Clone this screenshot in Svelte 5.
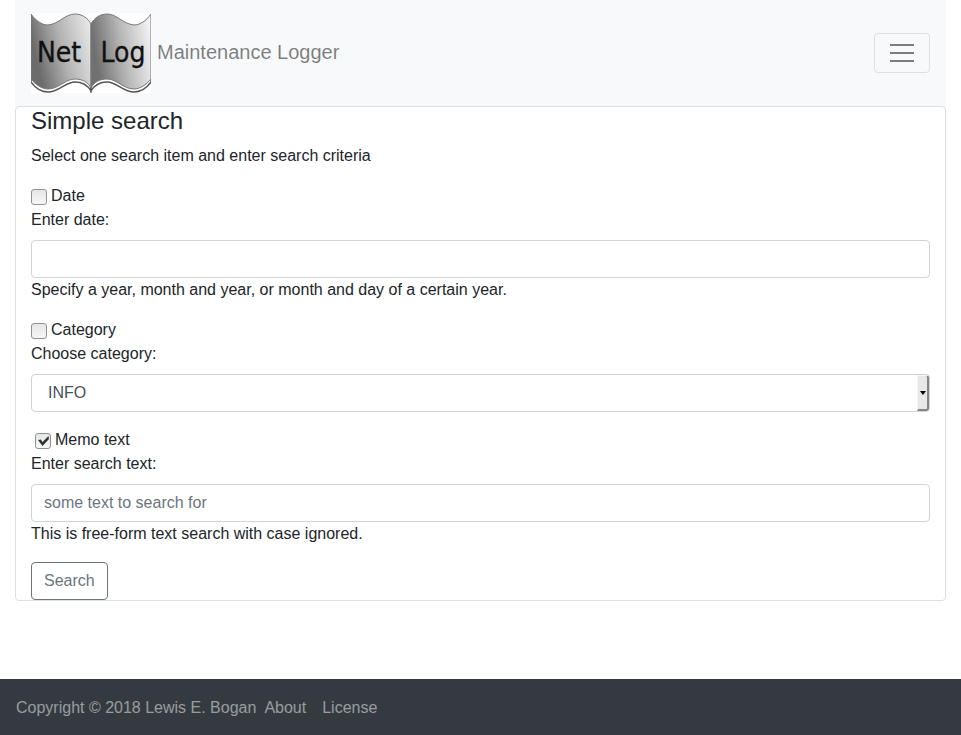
<script>
  let byDate = $state(false);
  let byCategory = $state(false);
  let byMemo = $state(true);
  let date = $state('');
  let category = $state('INFO');
  let memo = $state('');
</script>

<div class="container">
  <nav class="navbar">
    <a class="brand" href="#home">
      <svg class="logo" viewBox="0 0 120 80" role="img" aria-label="Net Log">
        <defs>
          <linearGradient id="leftPage" x1="0" y1="0.3" x2="1" y2="0">
            <stop offset="0" stop-color="#6c6c6c" />
            <stop offset="0.45" stop-color="#b4b4b4" />
            <stop offset="1" stop-color="#ededed" />
          </linearGradient>
          <linearGradient id="rightPage" x1="0" y1="0.2" x2="1" y2="0">
            <stop offset="0" stop-color="#707070" />
            <stop offset="0.45" stop-color="#b6b6b6" />
            <stop offset="1" stop-color="#f8f8f8" />
          </linearGradient>
        </defs>
        <rect width="120" height="80" fill="#fff" />
        <g fill="#fff" stroke="#555" stroke-width="1.4">
          <path d="M0 30V69C5 76 11 79 17 79C28 79 34 69 44 69C51 69 57 73 60 78V30Z" />
          <path d="M120 30V69C115 76 109 79 103 79C92 79 86 69 76 69C69 69 63 73 60 78V30Z" />
        </g>
        <g stroke="#777" stroke-width="1">
          <path fill="url(#leftPage)" d="M0 1C5 8 11 12 17 12C28 11 34 1 44 1C51 1 57 5 60 11V75C57 69 51 66 44 66C34 66 28 76 17 76C11 76 5 72 0 66Z" />
          <path fill="url(#rightPage)" d="M120 1C115 8 109 12 103 12C92 11 86 1 76 1C69 1 63 5 60 11V75C63 69 69 66 76 66C86 66 92 76 103 76C109 76 115 72 120 66Z" />
        </g>
        <g class="logo-text">
          <text x="28" y="49" text-anchor="middle">Net</text>
          <text x="92" y="49" text-anchor="middle">Log</text>
        </g>
      </svg>
      <span>Maintenance Logger</span>
    </a>
    <button class="toggler" type="button" aria-label="Toggle navigation">
      <svg viewBox="0 0 30 30" width="30" height="30" aria-hidden="true">
        <path stroke="rgba(0,0,0,.5)" stroke-width="2" stroke-miterlimit="10" d="M3 7h24M3 15h24M3 23h24" />
      </svg>
    </button>
  </nav>

  <main class="card">
    <h4>Simple search</h4>
    <p>Select one search item and enter search criteria</p>
    <form onsubmit={(e) => e.preventDefault()}>
      <div class="group">
        <label class="check"><input type="checkbox" bind:checked={byDate} />Date</label>
        <label class="caption" for="date">Enter date:</label>
        <input class="control" id="date" type="text" bind:value={date} />
        <div>Specify a year, month and year, or month and day of a certain year.</div>
      </div>
      <div class="group">
        <label class="check"><input type="checkbox" bind:checked={byCategory} />Category</label>
        <label class="caption" for="category">Choose category:</label>
        <div class="select">
          <select class="control" id="category" bind:value={category}>
            <option>INFO</option>
          </select>
          <span class="arrow"></span>
        </div>
      </div>
      <div class="group">
        <label class="check indented"><input type="checkbox" bind:checked={byMemo} />Memo text</label>
        <label class="caption" for="memo">Enter search text:</label>
        <input class="control" id="memo" type="text" placeholder="some text to search for" bind:value={memo} />
        <div>This is free-form text search with case ignored.</div>
      </div>
      <button class="search" type="submit">Search</button>
    </form>
  </main>
</div>

<footer>
  <span>Copyright © 2018 Lewis E. Bogan</span>
  <a href="#about">About</a>
  <a href="#license">License</a>
</footer>

<style>
  :global(body) {
    margin: 0;
    background: #fff;
    color: #212529;
    font: 16px/24px "Liberation Sans", Arial, sans-serif;
  }
  :global(*) {
    box-sizing: border-box;
  }
  .container {
    padding: 0 15px;
  }
  .navbar {
    display: flex;
    align-items: center;
    justify-content: space-between;
    padding: 8px 16px;
    background: #f8f9fa;
  }
  .brand {
    display: flex;
    align-items: center;
    gap: 6px;
    padding: 5px 0;
    color: rgba(0, 0, 0, 0.5);
    font-size: 20px;
    line-height: 28px;
    text-decoration: none;
  }
  .brand span {
    padding-bottom: 2px;
  }
  .logo {
    display: block;
    width: 120px;
    height: 80px;
  }
  .logo-text {
    fill: #111;
    stroke: #111;
    stroke-width: 0.3;
    font: 28px "Liberation Sans Narrow", "DejaVu Sans Condensed", sans-serif;
  }
  .toggler {
    display: flex;
    padding: 4px 12px;
    border: 1px solid rgba(0, 0, 0, 0.1);
    border-radius: 4px;
    background: transparent;
  }
  .card {
    padding: 0 15px;
    border: 1px solid #dfdfdf;
    border-radius: 4px;
    background: #fff;
    box-shadow: 0 -4px 0 -1px #f8f9fa;
  }
  h4 {
    margin: 0 0 9px;
    font-size: 24px;
    font-weight: 500;
    line-height: 28px;
  }
  p {
    margin: 0 0 16px;
  }
  .group {
    margin-bottom: 16px;
  }
  .check {
    display: flex;
    align-items: center;
    gap: 4px;
  }
  .indented {
    padding-left: 4px;
  }
  .check input {
    appearance: none;
    width: 16px;
    height: 16px;
    margin: 2px 0 0;
    border: 1px solid #929292;
    border-radius: 3px;
    background: linear-gradient(#e6e6e6, #f6f6f6);
  }
  .check input:checked {
    background:
      url("data:image/svg+xml,%3Csvg xmlns='http://www.w3.org/2000/svg' viewBox='0 0 14 14'%3E%3Cpath d='M2 6L5 5.5L6.5 8L12.5 2L13 5L6.5 12Z' fill='%232e3436'/%3E%3C/svg%3E"),
      linear-gradient(#e6e6e6, #f6f6f6);
  }
  .caption {
    display: block;
    margin-bottom: 8px;
  }
  .control {
    display: block;
    width: 100%;
    height: 38px;
    padding: 6px 12px;
    border: 1px solid #ced4da;
    border-radius: 4px;
    background: #fff;
    color: #495057;
    font: inherit;
  }
  .control::placeholder {
    color: #6c757d;
    opacity: 1;
  }
  .select {
    position: relative;
  }
  select.control {
    appearance: none;
    padding-left: 16px;
  }
  .arrow {
    position: absolute;
    top: 1px;
    right: 1px;
    bottom: 1px;
    display: flex;
    align-items: center;
    justify-content: center;
    width: 12px;
    border: solid;
    border-width: 1px 2px 2px 1px;
    border-color: #f4f4f4 #858585 #858585 #f4f4f4;
    border-radius: 0 3px 3px 0;
    background: #e8e8e7;
    pointer-events: none;
  }
  .arrow::before {
    content: "";
    border: 3px solid transparent;
    border-top: 4px solid #000;
    border-bottom: 0;
  }
  .search {
    display: block;
    height: 38px;
    padding: 6px 12px;
    border: 1px solid #6c757d;
    border-radius: 4px;
    background: transparent;
    color: #6c757d;
    font: inherit;
  }
  footer {
    position: fixed;
    right: 0;
    bottom: 0;
    left: 0;
    display: flex;
    padding: 17px 16px 15px;
    background: #343a40;
    color: rgba(255, 255, 255, 0.5);
  }
  footer a {
    padding: 0 8px;
    color: inherit;
    text-decoration: none;
  }
</style>
